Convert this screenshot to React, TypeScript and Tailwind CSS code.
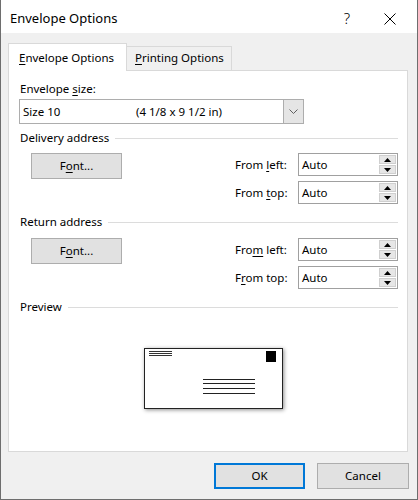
import type { ReactNode } from "react";

function App() {
  return (
    <div className="flex h-[500px] w-[418px] flex-col border-x border-b border-[#6e6e6e] bg-[#f0f0f0] font-['Noto_Sans',sans-serif] text-[11.5px] text-black">
      <div className="flex h-[33px] shrink-0 items-center bg-white pl-[9px] pt-[4px]">
        <span className="text-[13px]">Envelope Options</span>
        <span className="ml-auto mr-[34px] text-[15px] font-light">?</span>
        <svg width="12" height="12" viewBox="0 0 12 12" className="mr-[21px]">
          <path d="M0.5 0.5 L11.5 11.5 M11.5 0.5 L0.5 11.5" stroke="#000" strokeWidth="1" />
        </svg>
      </div>

      <div className="flex flex-1 flex-col pl-[7px] pr-[8px] pt-[10px]">
        <div className="flex h-[27px] items-end">
          <div className="relative z-10 -mb-px h-[28px] w-[119px] border-x border-t border-[#d9d9d9] bg-white pl-[10px] pt-[6px] leading-4">
            <Key>E</Key>nvelope Options
          </div>
          <div className="h-[24px] w-[105px] border-r border-t border-[#d9d9d9] bg-[#f0f0f0] pl-[8px] pt-[3px] leading-4">
            <Key>P</Key>rinting Options
          </div>
        </div>

        <div className="flex h-[382px] w-[400px] flex-col border border-[#d9d9d9] bg-white pl-[10px] pr-[9px] pt-[10px]">
          <div className="h-4 pl-px leading-4">
            Envelope <Key>s</Key>ize:
          </div>
          <div className="mt-[2px] flex h-[25px] w-[285px] border border-[#adadad] bg-white">
            <span className="w-[116px] pl-[3px] leading-[23px]">Size 10</span>
            <span className="flex-1 leading-[23px]">(4 1/8 x 9 1/2 in)</span>
            <div className="flex w-[20px] items-center justify-center border-l border-[#adadad] bg-[#e5e5e5]">
              <svg width="9" height="5" viewBox="0 0 9 5">
                <path d="M0.5 0.5 L4.5 4.5 L8.5 0.5" fill="none" stroke="#606060" strokeWidth="1" />
              </svg>
            </div>
          </div>

          <Section title="Delivery address" className="mt-[6px]" />
          <AddressBlock
            className="mt-[7px]"
            left={<>From <Key>l</Key>eft:</>}
            top={<>From <Key>t</Key>op:</>}
          />

          <Section title="Return address" className="mt-[10px]" />
          <AddressBlock
            className="mt-[8px]"
            left={<>Fro<Key>m</Key> left:</>}
            top={<>F<Key>r</Key>om top:</>}
          />

          <Section title="Preview" className="mt-[10px]" />
          <div className="ml-[125px] mt-[33px] h-[61px] w-[139px] shadow-[1px_1px_4px_rgba(0,0,0,0.45)]">
            <svg width="139" height="61" viewBox="0 0 139 61" className="block">
              <rect x="0.5" y="0.5" width="138" height="60" fill="#fff" stroke="#222" />
              <path d="M5 3.5 H28 M5 5.5 H28 M5 7.5 H28" stroke="#333" strokeWidth="1" />
              <rect x="122" y="3" width="10" height="11" fill="#000" />
              <path d="M59 31.5 H111 M59 35.5 H111 M59 40.5 H111 M59 45.5 H111" stroke="#222" strokeWidth="1" />
            </svg>
          </div>
        </div>

        <div className="mt-[11px] flex justify-end gap-[12px]">
          <button className="h-[26px] w-[91px] border-2 border-[#0078d7] bg-[#e1e1e1] leading-4">OK</button>
          <button className="h-[26px] w-[92px] border border-[#adadad] bg-[#e1e1e1] leading-4">Cancel</button>
        </div>
      </div>
    </div>
  );
}

function Key({ children }: { children: ReactNode }) {
  return <span className="underline underline-offset-[2px]">{children}</span>;
}

function Section({ title, className }: { title: string; className: string }) {
  return (
    <div className={`flex h-4 items-center gap-[6px] pl-px ${className}`}>
      <span className="leading-4">{title}</span>
      <div className="h-px flex-1 bg-[#dcdcdc]" />
    </div>
  );
}

function AddressBlock({ left, top, className }: { left: ReactNode; top: ReactNode; className: string }) {
  return (
    <div className={`flex items-start justify-between ${className}`}>
      <button className="ml-[12px] h-[26px] w-[91px] border border-[#adadad] bg-[#e1e1e1] leading-4">
        F<Key>o</Key>nt...
      </button>
      <div className="flex flex-col gap-[5px]">
        <SpinField label={left} />
        <SpinField label={top} />
      </div>
    </div>
  );
}

function SpinField({ label }: { label: ReactNode }) {
  return (
    <div className="flex items-center">
      <span className="w-[64px] pl-px leading-4">{label}</span>
      <div className="flex h-[23px] w-[100px] border border-[#a0a0a0] bg-white">
        <span className="flex-1 pl-[3px] leading-[21px]">Auto</span>
        <div className="flex w-[18px] flex-col gap-px py-px pr-px">
          <div className="flex flex-1 items-center justify-center border border-[#cfcfcf] bg-[#e6e6e6]">
            <svg width="7" height="4" viewBox="0 0 7 4">
              <path d="M0 4 L3.5 0 L7 4 Z" fill="#000" />
            </svg>
          </div>
          <div className="flex flex-1 items-center justify-center border border-[#cfcfcf] bg-[#e6e6e6]">
            <svg width="7" height="4" viewBox="0 0 7 4">
              <path d="M0 0 L3.5 4 L7 0 Z" fill="#000" />
            </svg>
          </div>
        </div>
      </div>
    </div>
  );
}

export default App;
